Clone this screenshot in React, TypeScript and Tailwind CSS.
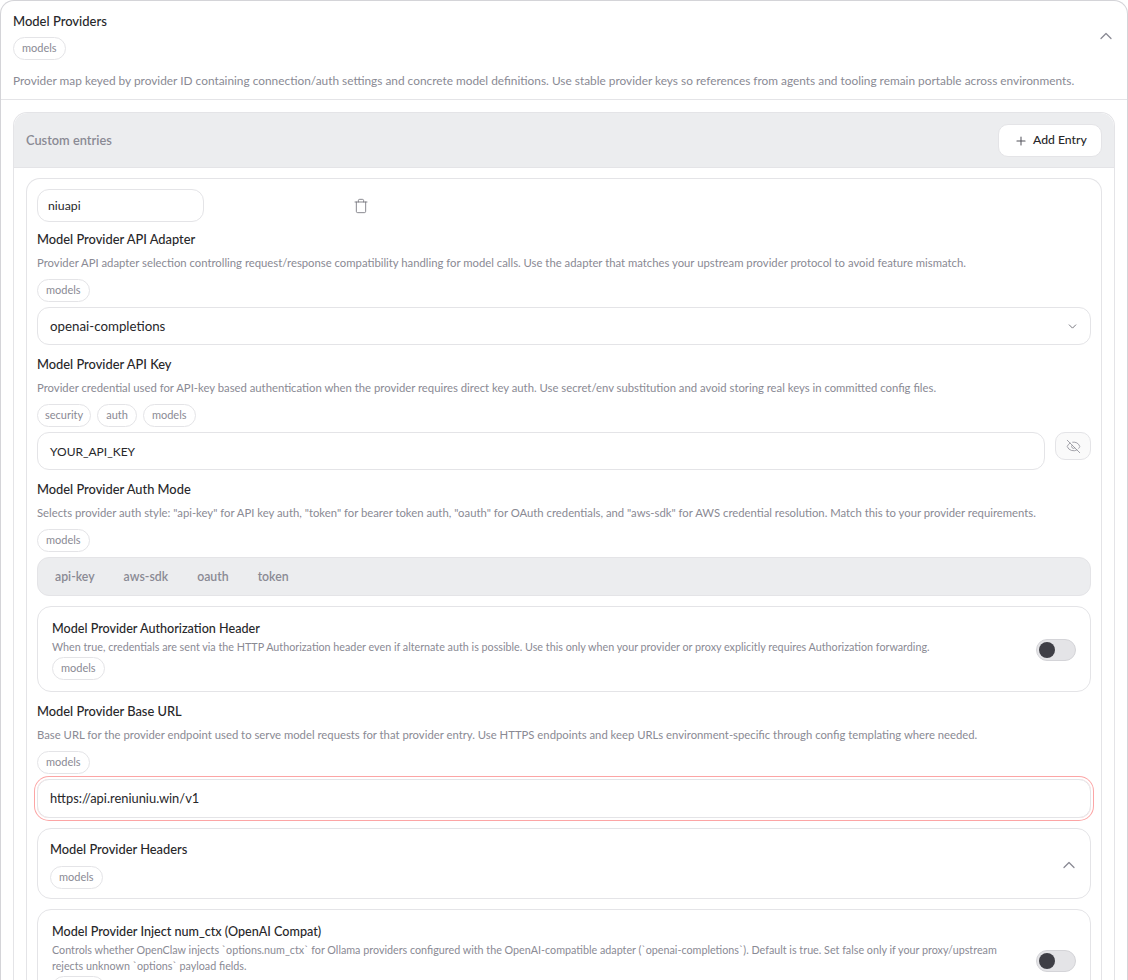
import { ChevronDown, ChevronUp, EyeOff, Plus, Trash } from "lucide-react";

function Tag({ label }: { label: string }) {
  return (
    <span
      className={`inline-flex h-[23px] items-center rounded-full border border-[#e4e4e7] text-[11px] text-[#8a8a94] ${
        label === "security" ? "px-[7px]" : "px-2"
      }`}
    >
      {label}
    </span>
  );
}

function Tags({ labels, className = "" }: { labels: string[]; className?: string }) {
  return (
    <div className={`flex gap-1.5 ${className}`}>
      {labels.map((l) => (
        <Tag key={l} label={l} />
      ))}
    </div>
  );
}

function FieldHead({ title, desc, tags }: { title: string; desc: string; tags: string[] }) {
  return (
    <div>
      <div className="text-[12.85px] leading-[18px] font-medium text-[#27272a]">{title}</div>
      <div className="mt-[6px] text-[11.3px] leading-[17px] text-[#8a8a94]">{desc}</div>
      <Tags labels={tags} className="mt-[8px]" />
    </div>
  );
}

function Toggle() {
  return (
    <div className="flex h-[22px] w-10 shrink-0 items-center rounded-full border border-[#d4d4d8] bg-[#e4e4e7] pl-[2px]">
      <div className="h-4 w-4 rounded-full bg-[#3f3f46]" />
    </div>
  );
}

function ToggleCard({ title, desc }: { title: string; desc: string }) {
  return (
    <div className="flex items-center justify-between gap-6 rounded-[14px] border border-[#e4e4e7] pt-[13px] pr-[14px] pb-[11px] pl-[14px]">
      <div className="flex-1">
        <div className="text-[12.6px] leading-[18px] font-medium text-[#27272a]">{title}</div>
        <div className="mt-[1px] text-[10.75px] leading-[16px] text-[#8a8a94]">{desc}</div>
        <Tags labels={["models"]} className="mt-[2px]" />
      </div>
      <Toggle />
    </div>
  );
}

export default function App() {
  return (
    <div className="h-[980px] overflow-hidden bg-white font-['Lato','Noto_Sans',sans-serif]">
      <div className="rounded-t-[14px] border-x border-t border-[#d4d4d8] bg-white">
        <div className="flex items-center justify-between pt-[11px] pr-[11px] pl-[12px]">
          <div>
            <div className="text-[13px] leading-[18px] font-medium text-[#27272a]">Model Providers</div>
            <Tags labels={["models"]} className="mt-[7px]" />
          </div>
          <ChevronUp size={20} strokeWidth={1.5} className="text-[#8a8a94]" />
        </div>
        <div className="border-b border-[#e4e4e7] pt-[12px] pr-[13px] pb-[10px] pl-[12px] text-[11.87px] leading-[17px] text-[#8a8a94]">
          Provider map keyed by provider ID containing connection/auth settings and concrete model definitions. Use
          stable provider keys so references from agents and tooling remain portable across environments.
        </div>

        <div className="px-3 pt-3">
          <div className="rounded-t-[14px] border-x border-t border-[#e4e4e7]">
            <div className="flex h-[55px] items-center justify-between rounded-t-[14px] border-b border-[#e4e4e7] bg-[#ecedef] pr-3 pl-3">
              <span className="pt-[1px] text-[12.8px] font-semibold text-[#8a8a94]">Custom entries</span>
              <button
                type="button"
                className="flex h-[33px] w-[104px] items-center gap-[5px] rounded-[10px] border border-[#e4e4e7] bg-white pt-[1px] pl-[15px] text-[12.2px] font-medium text-[#27272a]"
              >
                <Plus size={14} strokeWidth={1.75} className="text-[#52525b]" />
                Add Entry
              </button>
            </div>

            <div className="px-3 pt-[10px]">
              <div className="flex flex-col rounded-t-[14px] border-x border-t border-[#e4e4e7] px-[10px] pt-[10px]">
                <div className="flex items-center">
                  <div className="flex h-[33px] w-[167px] items-center rounded-[12px] border border-[#e4e4e7] px-[10px] pt-[1px] text-[12.3px] text-[#27272a]">
                    niuapi
                  </div>
                  <div className="ml-[149px] text-[#71717a]">
                    <Trash size={16} strokeWidth={1.25} />
                  </div>
                </div>

                <div className="mt-[8px]">
                  <FieldHead
                    title="Model Provider API Adapter"
                    desc="Provider API adapter selection controlling request/response compatibility handling for model calls. Use the adapter that matches your upstream provider protocol to avoid feature mismatch."
                    tags={["models"]}
                  />
                </div>
                <div className="mt-[5px] flex h-[38px] items-center justify-between rounded-[12px] border border-[#e4e4e7] pt-[1px] pr-[11px] pl-3 text-[13.3px] text-[#27272a]">
                  openai-completions
                  <ChevronDown size={13} strokeWidth={1.75} className="text-[#71717a]" />
                </div>

                <div className="mt-[10px]">
                  <FieldHead
                    title="Model Provider API Key"
                    desc="Provider credential used for API-key based authentication when the provider requires direct key auth. Use secret/env substitution and avoid storing real keys in committed config files."
                    tags={["security", "auth", "models"]}
                  />
                </div>
                <div className="mt-[5px] flex items-start gap-[10px]">
                  <div className="flex h-[38px] flex-1 items-center rounded-[12px] border border-[#e4e4e7] px-3 pt-[1px] text-[12px] text-[#27272a]">
                    YOUR_API_KEY
                  </div>
                  <button
                    type="button"
                    className="flex h-[28px] w-[36px] items-center justify-center rounded-[10px] border border-[#e4e4e7] bg-[#fafafa] text-[#8a8a94]"
                  >
                    <EyeOff size={15} strokeWidth={1.25} />
                  </button>
                </div>

                <div className="mt-[10px]">
                  <FieldHead
                    title="Model Provider Auth Mode"
                    desc={'Selects provider auth style: "api-key" for API key auth, "token" for bearer token auth, "oauth" for OAuth credentials, and "aws-sdk" for AWS credential resolution. Match this to your provider requirements.'}
                    tags={["models"]}
                  />
                </div>
                <div className="mt-[5px] flex h-[39px] items-center gap-[29px] rounded-[12px] border border-[#e4e4e7] bg-[#ecedef] pt-[2px] pl-[17px] text-[12.3px] font-semibold text-[#8a8a94]">
                  <span>api-key</span>
                  <span>aws-sdk</span>
                  <span>oauth</span>
                  <span>token</span>
                </div>

                <div className="mt-[10px]">
                  <ToggleCard
                    title="Model Provider Authorization Header"
                    desc="When true, credentials are sent via the HTTP Authorization header even if alternate auth is possible. Use this only when your provider or proxy explicitly requires Authorization forwarding."
                  />
                </div>

                <div className="mt-[10px]">
                  <FieldHead
                    title="Model Provider Base URL"
                    desc="Base URL for the provider endpoint used to serve model requests for that provider entry. Use HTTPS endpoints and keep URLs environment-specific through config templating where needed."
                    tags={["models"]}
                  />
                </div>
                <div className="mt-[5px] flex h-[39px] items-center rounded-[12px] border border-[#e4e4e7] px-3 pt-[1px] text-[12.9px] text-[#27272a] shadow-[0_0_0_2px_#fff,0_0_0_3px_#fca5a5]">
                  https://api.reniuniu.win/v1
                </div>

                <div className="mt-[10px] flex items-center justify-between rounded-[14px] border border-[#e4e4e7] pt-[11px] pr-[11px] pb-[9px] pl-3">
                  <div>
                    <div className="text-[12.85px] leading-[18px] font-medium text-[#27272a]">
                      Model Provider Headers
                    </div>
                    <Tags labels={["models"]} className="mt-[8px]" />
                  </div>
                  <ChevronUp size={20} strokeWidth={1.5} className="text-[#8a8a94]" />
                </div>

                <div className="mt-[10px]">
                  <ToggleCard
                    title="Model Provider Inject num_ctx (OpenAI Compat)"
                    desc="Controls whether OpenClaw injects `options.num_ctx` for Ollama providers configured with the OpenAI-compatible adapter (`openai-completions`). Default is true. Set false only if your proxy/upstream rejects unknown `options` payload fields."
                  />
                </div>
              </div>
            </div>
          </div>
        </div>
      </div>
    </div>
  );
}
